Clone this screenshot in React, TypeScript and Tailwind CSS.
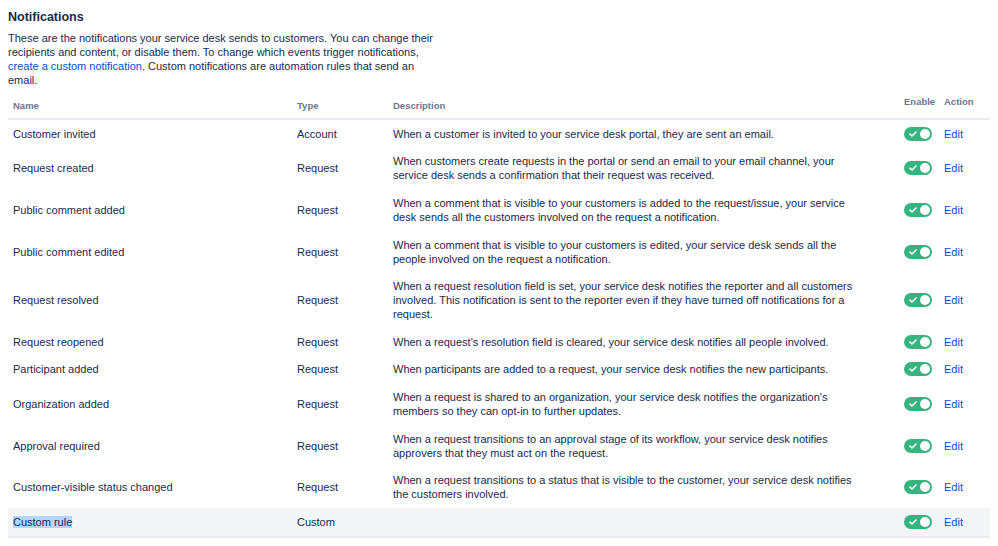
import React from 'react';

type Row = { name: string; type: string; desc: string[] };

const rows: Row[] = [
  { name: 'Customer invited', type: 'Account', desc: ['When a customer is invited to your service desk portal, they are sent an email.'] },
  { name: 'Request created', type: 'Request', desc: ['When customers create requests in the portal or send an email to your email channel, your', 'service desk sends a confirmation that their request was received.'] },
  { name: 'Public comment added', type: 'Request', desc: ['When a comment that is visible to your customers is added to the request/issue, your service', 'desk sends all the customers involved on the request a notification.'] },
  { name: 'Public comment edited', type: 'Request', desc: ['When a comment that is visible to your customers is edited, your service desk sends all the', 'people involved on the request a notification.'] },
  { name: 'Request resolved', type: 'Request', desc: ['When a request resolution field is set, your service desk notifies the reporter and all customers', 'involved. This notification is sent to the reporter even if they have turned off notifications for a', 'request.'] },
  { name: 'Request reopened', type: 'Request', desc: ["When a request's resolution field is cleared, your service desk notifies all people involved."] },
  { name: 'Participant added', type: 'Request', desc: ['When participants are added to a request, your service desk notifies the new participants.'] },
  { name: 'Organization added', type: 'Request', desc: ["When a request is shared to an organization, your service desk notifies the organization's", 'members so they can opt-in to further updates.'] },
  { name: 'Approval required', type: 'Request', desc: ['When a request transitions to an approval stage of its workflow, your service desk notifies', 'approvers that they must act on the request.'] },
  { name: 'Customer-visible status changed', type: 'Request', desc: ['When a request transitions to a status that is visible to the customer, your service desk notifies', 'the customers involved.'] },
];

function Toggle() {
  return (
    <div className="relative h-[14px] w-[28px] rounded-full bg-[#36b37e]">
      <svg className="absolute left-[5px] top-[4px]" width="8" height="6" viewBox="0 0 8 6">
        <path d="M1 3.2 L3 5 L7 1" fill="none" stroke="white" strokeWidth="1.6" strokeLinecap="round" strokeLinejoin="round" />
      </svg>
      <div className="absolute right-[2px] top-[2px] h-[10px] w-[10px] rounded-full bg-white" />
    </div>
  );
}

function TableRow({ row, last }: { row: Row; last?: boolean }) {
  return (
    <div className={`grid grid-cols-[289px_96px_1fr_40px_46px] items-center py-[6.8px] ${last ? 'bg-[#f4f5f7] border-b-2 border-[#ebecf0]' : ''}`}>
      <div className="pl-[5px]">
        {last ? <span className="bg-[#b4d5fe]">{row.name}</span> : row.name}
      </div>
      <div>{row.type}</div>
      <div className="min-h-[14px]">{row.desc.map((l, i) => <div key={i}>{l}</div>)}</div>
      <div className="h-[14px]"><Toggle /></div>
      <div className="text-[#0052cc]">Edit</div>
    </div>
  );
}

export default function App() {
  return (
    <div className="w-[998px] h-[546px] bg-white text-[#172b4d] overflow-hidden" style={{ fontFamily: '"Liberation Sans", Arial, sans-serif' }}>
      <div className="pl-[8px] pt-[9px] w-[990px]">
        <h2 className="text-[12.5px] font-bold leading-[16px] text-[#172b4d]">Notifications</h2>
        <p className="mt-[6px] text-[11px] leading-[14px] whitespace-nowrap">
          These are the notifications your service desk sends to customers. You can change their<br />
          recipients and content, or disable them. To change which events trigger notifications,<br />
          <a className="text-[#0052cc]">create a custom notification</a>. Custom notifications are automation rules that send an<br />
          email.
        </p>
        <div className="mt-[8px] text-[11px] leading-[14px]">
          <div className="grid grid-cols-[289px_96px_1fr_40px_46px] items-end pb-[5px] border-b-2 border-[#ebecf0] text-[9.5px] font-semibold text-[#6b778c]">
            <div className="pl-[5px]">Name</div>
            <div>Type</div>
            <div>Description</div>
            <div className="pb-[4px]">Enable</div>
            <div className="pb-[4px]">Action</div>
          </div>
          {rows.map((r) => <TableRow key={r.name} row={r} />)}
          <TableRow row={{ name: 'Custom rule', type: 'Custom', desc: [] }} last />
        </div>
      </div>
    </div>
  );
}
